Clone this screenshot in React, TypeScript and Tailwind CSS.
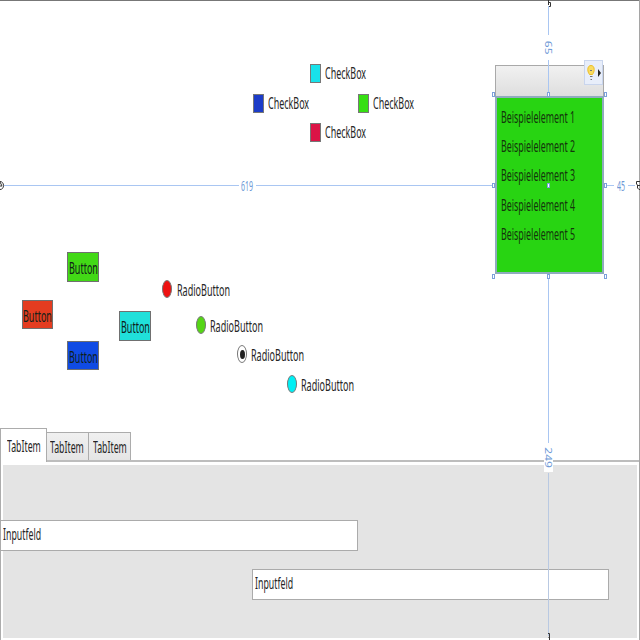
import { useLayoutEffect, useRef, useState } from "react";

type TextProps = { children: string; width: number; className?: string };

/* Condenses one line of text horizontally to the given width. */
function Condensed({ children, width, className = "" }: TextProps) {
  const ref = useRef<HTMLSpanElement>(null);
  const [scale, setScale] = useState(1);
  useLayoutEffect(() => {
    if (ref.current) setScale(width / ref.current.offsetWidth);
  }, [width, children]);
  return (
    <span className="inline-block shrink-0" style={{ width }}>
      <span
        ref={ref}
        className={`inline-block origin-left whitespace-nowrap ${className}`}
        style={{ transform: `scaleX(${scale})` }}
      >
        {children}
      </span>
    </span>
  );
}

const checkboxes = [
  { pos: "left-[310px] top-[63px]", fill: "bg-[#18e2ea]" },
  { pos: "left-[253px] top-[93px]", fill: "bg-[#1c3cc8]" },
  { pos: "left-[358px] top-[93px]", fill: "bg-[#36df12]" },
  { pos: "left-[310px] top-[122px]", fill: "bg-[#dc1446]" },
];

const buttons = [
  { pos: "left-[67px] top-[252px] w-[32px] h-[30px]", fill: "bg-[#42d916]" },
  { pos: "left-[22px] top-[300px] w-[31px] h-[29px]", fill: "bg-[#e43c20]" },
  { pos: "left-[119px] top-[311px] w-[32px] h-[30px]", fill: "bg-[#20e0da]" },
  { pos: "left-[67px] top-[341px] w-[32px] h-[29px]", fill: "bg-[#104be4]" },
];

const radios = [
  { pos: "left-[162px] top-[279px]", gap: "gap-[5px]", fill: "bg-[#ee1212]", on: false },
  { pos: "left-[196px] top-[315px]", gap: "gap-[4px]", fill: "bg-[#55d516]", on: false },
  { pos: "left-[237px] top-[344px]", gap: "gap-[4px]", fill: "bg-white", on: true },
  { pos: "left-[287px] top-[374px]", gap: "gap-[4px]", fill: "bg-[#00eff4]", on: false },
];

const handles = [
  "left-[492px] top-[92px]",
  "left-[547px] top-[92px]",
  "left-[604px] top-[92px]",
  "left-[492px] top-[183px]",
  "left-[547px] top-[183px]",
  "left-[604px] top-[183px]",
  "left-[492px] top-[274px]",
  "left-[547px] top-[274px]",
  "left-[604px] top-[274px]",
];

const listItems = [1, 2, 3, 4, 5];

function ListPanel() {
  return (
    <div className="absolute left-[495px] top-[65px] flex w-[109px] flex-col">
      <div className="h-[31px] border border-b-0 border-[#a9a9a9] bg-linear-to-b from-[#f1f1f1] to-[#dedede]" />
      <div className="flex h-[178px] flex-col border-2 border-[#8fabbd] bg-[#28d412] pt-[4px] pl-1 text-[#14350c]">
        {listItems.map((n) => (
          <div key={n} className="flex h-[29.3px] items-center">
            <Condensed width={74}>{`Beispielelement ${n}`}</Condensed>
          </div>
        ))}
      </div>
    </div>
  );
}

function Guides() {
  return (
    <>
      <div className="absolute left-0 top-[177px] flex h-[17px] w-full items-center text-[14px] leading-4 text-[#6d98d6]">
        <i className="ml-1 h-px w-[235px] bg-[#a9c6f2]" />
        <span className="ml-[2px] flex"><Condensed width={12}>619</Condensed></span>
        <i className="ml-[3px] h-px w-[237px] bg-[#a9c6f2]" />
        <i className="ml-[114px] h-px w-[7px] bg-[#a9c6f2]" />
        <span className="ml-[3px] flex"><Condensed width={8}>45</Condensed></span>
        <i className="ml-[3px] h-px w-[7px] bg-[#a9c6f2]" />
      </div>
      <div className="absolute left-[540px] top-0 flex h-full w-[17px] flex-col items-center text-[10px] leading-4 text-[#6d98d6]">
        <i className="mt-[6px] h-[29px] w-px bg-[#a9c6f2]" />
        <span className="flex h-[25px] w-4 items-center justify-center [writing-mode:vertical-rl]">
          <span className="inline-block scale-x-90 scale-y-[1.2]">65</span>
        </span>
        <i className="h-[35px] w-px bg-[#a9c6f2]" />
        <i className="mt-[182px] h-[166px] w-px bg-[#a9c6f2]" />
        <span className="mt-[3px] mb-px flex h-[26px] w-[9px] items-center justify-center bg-white pb-[2px] [writing-mode:vertical-rl]">
          <span className="inline-block scale-x-90 scale-y-[1.2]">249</span>
        </span>
        <i className="h-[163px] w-px bg-[#b9c9e2]" />
      </div>
      {handles.map((pos) => (
        <i key={pos} className={`absolute h-[5px] w-[3px] border border-[#7da0db] bg-white ${pos}`} />
      ))}
      <svg className="absolute inset-0 h-[640px] w-[640px]" viewBox="0 0 640 640" fill="none" stroke="#333" strokeWidth="1">
        <path d="M548 2.500h2.500v4h-1.500M548.500 0v5M548 633.500h1.500v4h-1M549.500 637v3" />
        <path d="M0 181.500c2 0 3.500 1.500 3.500 4s-1.500 4-3.500 4M0 182l2 4H0M640 181.500h-3.500v2.500l1 1v3l1.500 1.500h1M638 185.500h2" />
      </svg>
    </>
  );
}

export default function App() {
  return (
    <main className="relative flex h-[640px] w-[640px] flex-col overflow-hidden bg-white font-['Noto_Sans','Open_Sans',sans-serif] text-[15.5px] leading-5 text-[#252525]">
      <section className="relative h-[428px] shrink-0 border-t border-[#777]">
        <div className="absolute inset-x-0 -top-px h-[428px]">
          {checkboxes.map((c) => (
            <div key={c.pos} className={`absolute flex h-5 items-center gap-1 ${c.pos}`}>
              <i className={`h-[19px] w-[11px] border border-[#777] ${c.fill}`} />
              <Condensed width={41}>CheckBox</Condensed>
            </div>
          ))}
          {buttons.map((b) => (
            <button
              key={b.pos}
              className={`absolute flex items-center justify-center border border-[#707070] pt-[2px] text-[#102018] ${b.pos} ${b.fill}`}
            >
              <Condensed width={29}>Button</Condensed>
            </button>
          ))}
          {radios.map((r) => (
            <div key={r.pos} className={`absolute flex h-5 items-center ${r.gap} ${r.pos}`}>
              <i className={`flex h-[18px] w-[10px] items-center justify-center rounded-[50%] border border-[#777] ${r.fill}`}>
                {r.on && <i className="h-[9px] w-[5px] rounded-[50%] bg-[#202020]" />}
              </i>
              <span className="flex pt-[2px]"><Condensed width={53}>RadioButton</Condensed></span>
            </div>
          ))}
          <ListPanel />
        </div>
      </section>

      <nav className="flex h-[34px] shrink-0 items-end border-b-2 border-[#bdbdbd]">
        <div className="-mb-[2px] flex h-[34px] w-[47px] items-center justify-center border border-b-0 border-[#acacac] bg-white">
          <Condensed width={34}>TabItem</Condensed>
        </div>
        <div className="flex h-[28px] w-[42px] items-center border-t border-r border-[#acacac] bg-linear-to-b from-[#f0f0f0] to-[#e5e5e5] pt-[1px] pl-[3px]">
          <Condensed width={34}>TabItem</Condensed>
        </div>
        <div className="flex h-[28px] w-[42px] items-center border-t border-r border-[#acacac] bg-linear-to-b from-[#f0f0f0] to-[#e5e5e5] pt-[1px] pl-1">
          <Condensed width={34}>TabItem</Condensed>
        </div>
      </nav>

      <section className="flex h-[178px] w-full flex-col border-l border-[#acacac] pt-[3px] pr-[3px] pb-[2px] pl-[2px]">
        <div className="flex h-[173px] flex-col bg-[#e4e4e4] pt-[55px]">
          <div className="-ml-[3px] flex h-[31px] w-[358px] items-center border border-[#ababab] bg-white pb-[3px] pl-[2px]">
            <Condensed width={38}>Inputfeld</Condensed>
          </div>
          <div className="mt-[18px] ml-[249px] flex h-[31px] w-[357px] items-center border border-[#ababab] bg-white pb-[3px] pl-[2px]">
            <Condensed width={38}>Inputfeld</Condensed>
          </div>
        </div>
      </section>

      <i className="absolute top-0 right-0 h-full w-px bg-[#a5a5a5]" />
      <Guides />
      <div className="absolute left-[584px] top-[60px] flex h-[25px] w-[19px] items-center justify-center gap-[3px] border border-[#c9d5ed] bg-[#e8eefa]">
        <svg className="h-[18px] w-[8px]" viewBox="0 0 8 18" fill="none">
          <path d="M2.500 10.500C1.500 9 .8 7.500.8 5.500.8 3 2 1.500 4 1.500S7.200 3 7.200 5.500c0 2-.7 3.500-1.700 5z" fill="#f8dc61" stroke="#edbd25" />
          <path d="M3 6.500h2M3 12.500h2.500M3.500 15.500h1.500" stroke="#777" />
        </svg>
        <svg className="h-[8px] w-[3px]" viewBox="0 0 3 8"><path d="M0 0l3 4-3 4z" fill="#222" /></svg>
      </div>
    </main>
  );
}
